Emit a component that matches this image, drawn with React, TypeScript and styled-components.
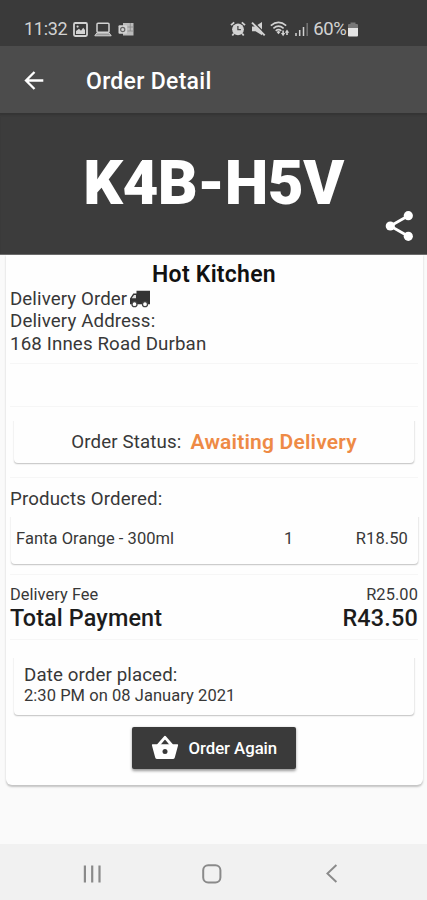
import React from 'react';
import styled, { createGlobalStyle } from 'styled-components';

const GlobalStyle = createGlobalStyle`
  *, *::before, *::after { box-sizing: border-box; }
  body { margin: 0; background: #fafafa; font-family: Roboto, "Liberation Sans", sans-serif; }
  svg { display: block; flex: none; }
`;

const Screen = styled.div`
  display: flex;
  flex-direction: column;
  width: 427px;
  height: 900px;
  overflow: hidden;
  background: #fafafa;
  color: #383838;
`;

const StatusBar = styled.header`
  display: flex;
  align-items: center;
  justify-content: space-between;
  height: 46px;
  padding: 12px 69px 0 24px;
  background: #3a3a3a;
  color: #d2d2d2;
`;

const StatusGroup = styled.div<{ $gap: number }>`
  display: flex;
  align-items: center;
  gap: ${(p) => p.$gap}px;
`;

/* One line of text, with its type size, weight, tracking and line box. */
const Text = styled.span<{ $size: number; $line: number; $weight?: number; $track?: number; $color?: string }>`
  display: block;
  white-space: nowrap;
  font-size: ${(p) => p.$size}px;
  line-height: ${(p) => p.$line}px;
  font-weight: ${(p) => p.$weight ?? 400};
  letter-spacing: ${(p) => p.$track ?? 0}px;
  color: ${(p) => p.$color ?? 'inherit'};
`;

const AppBar = styled.nav`
  display: flex;
  align-items: center;
  gap: 40px;
  height: 67px;
  padding: 4px 0 0 22px;
  background: #4c4c4c;
  color: #fff;
`;

const IconButton = styled.button`
  display: flex;
  padding: 0;
  border: 0;
  background: none;
  color: inherit;
`;

const Banner = styled.section`
  display: flex;
  flex-direction: column;
  align-items: center;
  height: 142px;
  padding-top: 33px;
  background: #3c3c3c;
  border-bottom: 1px solid #6c6c6c;
  box-shadow: inset 0 3px 2px -1px #343434;
  color: #fff;
`;

const ShareSlot = styled.div`
  align-self: flex-end;
  margin: -10px 13px 0 0;
`;

const Content = styled.main`
  flex: 1;
  padding: 0 4px 0 6px;
`;

const OrderCard = styled.article`
  display: flex;
  flex-direction: column;
  height: 530px;
  padding: 7px 5px 0 4px;
  border-radius: 0 0 6px 6px;
  background: #fefefe;
  box-shadow: 0 1.5px 2px rgba(0, 0, 0, 0.22);
`;

const Divider = styled.hr`
  width: 100%;
  height: 1px;
  margin: 0;
  border: 0;
  background: #f6f6f6;
`;

const Line = styled.div<{ $gap?: number }>`
  display: flex;
  align-items: center;
  gap: ${(p) => p.$gap ?? 0}px;
`;

const SplitLine = styled(Line)`
  justify-content: space-between;
`;

const Title = styled.h1`
  margin: 0;
  display: flex;
  justify-content: center;
`;

const Panel = styled.section<{ $inset?: number }>`
  margin: 0 ${(p) => p.$inset ?? 0}px;
  border-radius: 4px;
  background: #fefefe;
  box-shadow: 0 1.5px 1.5px -0.5px rgba(0, 0, 0, 0.2), 0.5px 1px 1.5px rgba(0, 0, 0, 0.05);
  clip-path: inset(6px -4px -4px -4px);
`;

const StatusPanel = styled(Panel)`
  display: flex;
  align-items: center;
  justify-content: center;
  gap: 9px;
  height: 48px;
  margin-top: 8px;
  padding-top: 5px;
`;

const ProductPanel = styled(Panel)`
  display: grid;
  grid-template-columns: 1fr 40px 84px;
  align-items: center;
  height: 53px;
  padding: 2px 10px 0 5px;
  margin-left: 1px;
  margin-right: 0;
`;

const Right = styled.div`
  display: flex;
  justify-content: flex-end;
`;

const DatePanel = styled(Panel)`
  height: 63px;
  margin-top: 12px;
  padding: 12px 0 0 10px;
`;

const PrimaryButton = styled.button`
  display: flex;
  align-items: center;
  align-self: center;
  gap: 10px;
  width: 164px;
  height: 42px;
  margin: 12px 1px 0 0;
  padding: 0 0 0 19px;
  border: 0;
  border-radius: 2px;
  background: #3a3a3a;
  box-shadow: 0 1.5px 3px rgba(0, 0, 0, 0.4);
  color: #fff;
  font-family: inherit;
`;

const Gap = styled.div<{ $h: number }>`
  height: ${(p) => p.$h}px;
`;

const NavBar = styled.footer`
  display: flex;
  align-items: center;
  gap: 104px;
  height: 56px;
  padding: 3px 0 0 82px;
  background: #f1f1f1;
  color: #8a8a8a;

  & > :first-child { margin-right: -4px; }
`;

const PictureIcon = () => (
  <svg width="15" height="15" viewBox="0 0 15 15">
    <rect x="1" y="1" width="13" height="13" rx="1.2" fill="none" stroke="currentColor" strokeWidth="1.8" />
    <path d="M3 12V9l3-2.2 2 2 2.2-3L12 8v4z" fill="currentColor" />
    <circle cx="4.6" cy="4.6" r="1.1" fill="currentColor" />
  </svg>
);

const LaptopIcon = () => (
  <svg width="18" height="15" viewBox="0 0 18 15">
    <rect x="3" y="1.2" width="12" height="9" rx="1" fill="none" stroke="currentColor" strokeWidth="1.5" />
    <path d="M2.8 11h12.4l2 2.800H.8z" fill="#999" stroke="currentColor" strokeWidth="1" />
  </svg>
);

const OutlookIcon = () => (
  <svg width="16" height="15" viewBox="0 0 16 15">
    <path d="M5 1h10.5v12.5H5z" fill="currentColor" opacity="0.85" />
    <rect x="0.5" y="3.2" width="8.5" height="8.5" rx="1" fill="currentColor" />
    <circle cx="4.7" cy="7.5" r="2.1" fill="none" stroke="#666" strokeWidth="1.2" />
    <path d="M9.5 5h6M9.5 9h6M12.3 1v8" stroke="#888" strokeWidth="0.8" />
  </svg>
);

const AlarmIcon = () => (
  <svg width="16" height="16" viewBox="0 0 16 16">
    <circle cx="8" cy="8.3" r="5.9" fill="currentColor" />
    <path d="M1 4.2 4.2 1.3M11.8 1.3 15 4.200M3.8 12.5 2.3 14.6M12.2 12.5l1.5 2.1" stroke="currentColor" strokeWidth="1.8" />
    <path d="M7.9 5v3.7h3" fill="none" stroke="#4a4a4a" strokeWidth="1.3" />
  </svg>
);

const MuteIcon = () => (
  <svg width="15" height="16" viewBox="0 0 15 16">
    <path d="M1 5.4h3L11 1v13.3L4.5 10.3H1z" fill="currentColor" />
    <path d="M2 .6 14.5 13.1" stroke="#3a3a3a" strokeWidth="1.4" />
    <path d="M1 1.6 13.7 14.3" stroke="currentColor" strokeWidth="1.9" />
  </svg>
);

const WifiIcon = () => (
  <svg width="20" height="16" viewBox="0 0 20 16">
    <g fill="none" stroke="currentColor" strokeWidth="1.6">
      <path d="M.8 4.700Q8.500-1.800 16.200 4.700" />
      <path d="M3.400 7.300q5.100-4.200 10.200 0" />
      <path d="M5.700 9.900q2.800-2.400 5.600 0" />
    </g>
    <path d="m6.600 11 1.900-1.200 1.900 1.200-1.900 2.200z" fill="currentColor" />
    <path d="M13.100 15.200 10.900 12h1.400V9.500h1.600V12h1.400zM17 8.500l2.200 3.200h-1.400V14h-1.600v-2.300h-1.400z" fill="currentColor" />
  </svg>
);

const SignalIcon = () => (
  <svg width="14" height="14" viewBox="0 0 14 14">
    <path d="M1 14v-3M4.700 14V8M8.500 14V5" stroke="currentColor" strokeWidth="1.5" />
    <path d="M12.200 14V1" stroke="#757575" strokeWidth="1.5" />
  </svg>
);

const BatteryIcon = () => (
  <svg width="10" height="15" viewBox="0 0 10 15">
    <path d="M0 6V3q0-1 1-1h1.500V.5h5V2H9q1 0 1 1v3z" fill="#777" />
    <path d="M0 6h10v7.500q0 1-1 1H1q-1 0-1-1z" fill="#e4e4e4" />
  </svg>
);

const BackArrow = () => (
  <svg width="24" height="24" viewBox="0 0 24 24">
    <path d="M21.300 10.500H4M12.500 2 4 10.500l8.500 8.500" fill="none" stroke="currentColor" strokeWidth="2.3" />
  </svg>
);

const ShareIcon = () => (
  <svg width="30" height="32" viewBox="0 0 30 32">
    <path d="M24.300 5.700 6.300 16l18 10.300" fill="none" stroke="currentColor" strokeWidth="2.8" />
    <circle cx="24.3" cy="5.7" r="4.6" fill="currentColor" />
    <circle cx="6.3" cy="16" r="4.6" fill="currentColor" />
    <circle cx="24.3" cy="26.3" r="4.6" fill="currentColor" />
  </svg>
);

const TruckIcon = () => (
  <svg width="22" height="18" viewBox="0 0 22 18">
    <path d="M7.500.8H21v13.500H1V8.500l3.300-5h3.200z" fill="#333" />
    <path d="M2.700 8.300 5 5h2v3.300z" fill="#ddd" />
    <circle cx="5.5" cy="14.2" r="2.5" fill="#fff" stroke="#444" strokeWidth="1.3" />
    <circle cx="16" cy="14.2" r="2.5" fill="#fff" stroke="#444" strokeWidth="1.3" />
  </svg>
);

const BasketIcon = () => (
  <svg width="28" height="26" viewBox="0 0 28 26">
    <path d="M7 10.500 14 2.300l7 8.200" fill="none" stroke="currentColor" strokeWidth="2.8" strokeLinejoin="round" />
    <path d="M1.600 9.300h24.800q.9 0 .7 1l-3.300 12.200q-.4 1.500-2 1.500H6.200q-1.600 0-2-1.500L.9 10.300q-.2-1 .7-1z" fill="currentColor" />
    <circle cx="14" cy="16.4" r="2.5" fill="#3a3a3a" />
  </svg>
);

const RecentsIcon = () => (
  <svg width="20" height="18" viewBox="0 0 20 18">
    <path d="M2.900.5v17M10.200.5v17M17.500.5v17" stroke="currentColor" strokeWidth="2.2" />
  </svg>
);

const HomeIcon = () => (
  <svg width="20" height="20" viewBox="0 0 20 20">
    <rect x="1.2" y="1.2" width="17.2" height="17.2" rx="5" fill="none" stroke="currentColor" strokeWidth="2" />
  </svg>
);

const NavBackIcon = () => (
  <svg width="12" height="19" viewBox="0 0 12 19">
    <path d="M10.400 1 1.400 9.500l9 8.500" fill="none" stroke="currentColor" strokeWidth="1.9" />
  </svg>
);

export default function App() {
  return (
    <>
      <GlobalStyle />
      <Screen>
        <StatusBar>
          <StatusGroup $gap={6}>
            <Text $size={18} $line={22} $track={-0.3}>11:32</Text>
            <PictureIcon />
            <LaptopIcon />
            <OutlookIcon />
          </StatusGroup>
          <StatusGroup $gap={4.5}>
            <AlarmIcon />
            <MuteIcon />
            <WifiIcon />
            <SignalIcon />
            <StatusGroup $gap={1.5}>
              <Text $size={18.5} $line={22} $track={-0.4}>60%</Text>
              <BatteryIcon />
            </StatusGroup>
          </StatusGroup>
        </StatusBar>

        <AppBar>
          <IconButton aria-label="Back"><BackArrow /></IconButton>
          <Text $size={23} $line={28} $weight={500} $track={0.3}>Order Detail</Text>
        </AppBar>

        <Banner>
          <Text $size={62} $line={74} $weight={900} $track={-0.5}>K4B-H5V</Text>
          <ShareSlot>
            <IconButton aria-label="Share"><ShareIcon /></IconButton>
          </ShareSlot>
        </Banner>

        <Content>
          <OrderCard>
            <Title><Text $size={23} $line={26} $weight={600} $track={0.25} $color="#111">Hot Kitchen</Text></Title>
            <Line $gap={2}>
              <Text $size={18.7} $line={22} $track={0.1}>Delivery Order</Text>
              <TruckIcon />
            </Line>
            <Text $size={18.7} $line={22} $track={0.12}>Delivery Address:</Text>
            <Text $size={18.7} $line={24} $track={0.14}>168 Innes Road Durban</Text>
            <Gap $h={7} />
            <Divider />
            <Gap $h={42} />
            <Divider />
            <StatusPanel $inset={4}>
              <Text $size={18.7} $line={22} $track={0.15}>Order Status:</Text>
              <Text $size={21} $line={24} $weight={600} $track={0.19} $color="#ee8a45">Awaiting Delivery</Text>
            </StatusPanel>
            <Gap $h={14} />
            <Divider />
            <Gap $h={9} />
            <Text $size={18.7} $line={24} $track={0.13}>Products Ordered:</Text>
            <ProductPanel>
              <Text $size={16.5} $line={20} $track={0.05}>Fanta Orange - 300ml</Text>
              <Text $size={16.5} $line={20}>1</Text>
              <Right><Text $size={16.5} $line={20} $track={0.1}>R18.50</Text></Right>
            </ProductPanel>
            <Gap $h={10} />
            <Divider />
            <Gap $h={9} />
            <SplitLine>
              <Text $size={16.4} $line={21} $track={0.05}>Delivery Fee</Text>
              <Text $size={16.4} $line={21} $track={0.1}>R25.00</Text>
            </SplitLine>
            <SplitLine>
              <Text $size={23.4} $line={26} $weight={500} $track={0.12} $color="#1c1c1c">Total Payment</Text>
              <Text $size={23.4} $line={26} $weight={500} $track={0.2} $color="#1c1c1c">R43.50</Text>
            </SplitLine>
            <Gap $h={8} />
            <Divider />
            <DatePanel $inset={4}>
              <Text $size={18.7} $line={22} $track={0.12}>Date order placed:</Text>
              <Text $size={16.5} $line={20} $track={0.05}>2:30 PM on 08 January 2021</Text>
            </DatePanel>
            <PrimaryButton>
              <BasketIcon />
              <Text $size={16.8} $line={22} $weight={500} $track={-0.05}>Order Again</Text>
            </PrimaryButton>
          </OrderCard>
        </Content>

        <NavBar>
          <RecentsIcon />
          <HomeIcon />
          <NavBackIcon />
        </NavBar>
      </Screen>
    </>
  );
}
